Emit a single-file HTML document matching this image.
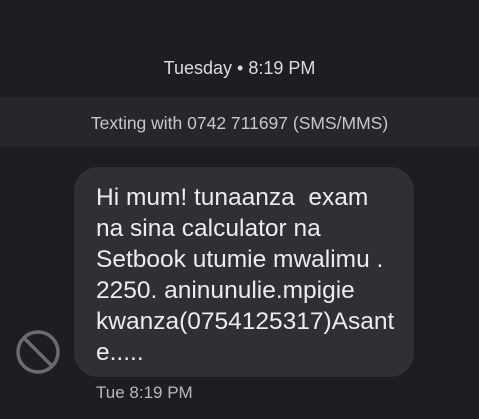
<!DOCTYPE html>
<html><head><style>
body{margin:0;width:479px;height:419px;background:#1d1e21;font-family:"Liberation Sans",sans-serif;position:relative;overflow:hidden}
.t{position:absolute;left:0;width:479px;text-align:center;color:#dcdcde;font-size:18px}
.band{position:absolute;left:0;top:97px;width:479px;height:50px;background:#26272a}
.b{position:absolute;left:74px;top:167px;width:340px;height:210px;background:#2f3033;border-radius:24px}
.msg{position:absolute;left:96px;top:182px;width:315px;color:#ececee;font-size:24.5px;line-height:31px;white-space:pre}
.ts{position:absolute;left:96px;top:383px;color:#b8b8ba;font-size:17px}
</style></head><body>
<div class="t" style="top:58px">Tuesday • 8:19 PM</div>
<div class="band"></div>
<div class="t" style="top:113px;color:#c8c8ca;font-size:17.5px">Texting with 0742 711697 (SMS/MMS)</div>
<div class="b"></div>
<div class="msg">Hi mum! tunaanza  exam
na sina calculator na
Setbook utumie mwalimu .
2250. aninunulie.mpigie
kwanza(0754125317)Asant
e.....</div>
<svg style="position:absolute;left:15px;top:329px" width="46" height="46"><circle cx="23" cy="23" r="20" fill="none" stroke="#6b6b6e" stroke-width="3.5"/><line x1="9" y1="9" x2="37" y2="37" stroke="#6b6b6e" stroke-width="3.5"/></svg>
<div class="ts">Tue 8:19 PM</div>
</body></html>
